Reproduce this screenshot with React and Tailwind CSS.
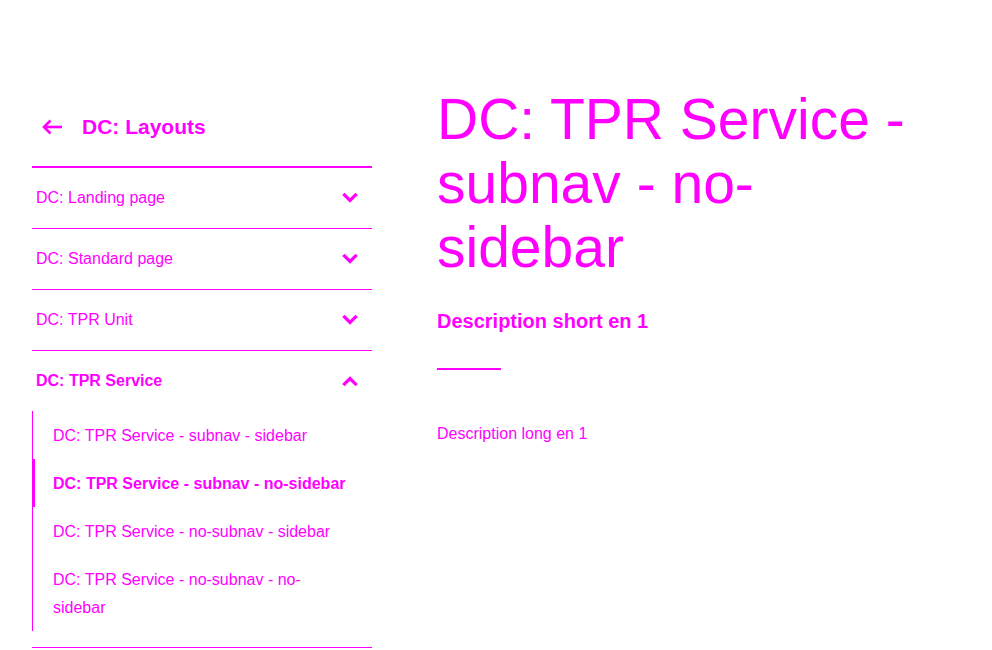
import { useState } from 'react';

const groups = [
    { title: 'DC: Landing page' },
    { title: 'DC: Standard page' },
    { title: 'DC: TPR Unit' },
    {
        title: 'DC: TPR Service',
        open: true,
        children: [
            { title: 'DC: TPR Service - subnav - sidebar' },
            { title: 'DC: TPR Service - subnav - no-sidebar', active: true },
            { title: 'DC: TPR Service - no-subnav - sidebar' },
            { title: 'DC: TPR Service - no-subnav - no-sidebar' },
        ],
    },
];

function Chevron({ up }) {
    return (
        <svg width="16" height="10" viewBox="0 0 16 10" fill="none" stroke="currentColor" strokeWidth={3.2} strokeLinecap="square">
            {up ? <polyline points="2.5,8 8,2.5 13.5,8" /> : <polyline points="2.5,2 8,7.5 13.5,2" />}
        </svg>
    );
}

export default function App() {
    const [openIndex, setOpenIndex] = useState(3);

    return (
        <div className="min-h-[650px] bg-white text-[#ff00ff]" style={{ fontFamily: '"Liberation Sans", Arial, sans-serif' }}>
            <div className="flex pl-8 pt-[87px]">
                <aside className="w-[340px] shrink-0">
                    <div className="flex h-[81px] items-center border-b-2 border-[#ff00ff] pl-[10px]">
                        <svg width="22" height="16" viewBox="0 0 22 16" fill="none" stroke="currentColor" strokeWidth={2.6}>
                            <line x1="2" y1="8" x2="20" y2="8" />
                            <polyline points="8.5,1.5 2,8 8.5,14.5" />
                        </svg>
                        <span className="ml-[18px] text-[21px] font-bold">DC: Layouts</span>
                    </div>
                    {groups.map((group, i) => {
                        const open = openIndex === i;
                        return (
                            <div key={group.title} className="border-b border-[#ff00ff]">
                                <button
                                    onClick={() => setOpenIndex(open ? null : i)}
                                    className="flex h-[60px] w-full items-center justify-between pl-1 pr-[14px] text-left"
                                >
                                    <span className={`text-[16px] ${open ? 'font-bold' : ''}`}>{group.title}</span>
                                    <Chevron up={open} />
                                </button>
                                {open && group.children && (
                                    <ul className="mb-[16px] border-l border-[#ff00ff]">
                                        {group.children.map((child) => (
                                            <li
                                                key={child.title}
                                                className={`pt-[11px] pb-[9px] pl-5 pr-[22px] text-[16px] leading-[28px] ${
                                                    child.active ? '-ml-px border-l-[3px] border-[#ff00ff] pl-[18px] font-bold' : ''
                                                }`}
                                            >
                                                {child.title}
                                            </li>
                                        ))}
                                    </ul>
                                )}
                            </div>
                        );
                    })}
                </aside>

                <main className="ml-[65px] w-[490px]">
                    <h1 className="text-[57px] leading-[64px]">DC: TPR Service - subnav - no-sidebar</h1>
                    <p className="mt-[28px] text-[20px] font-bold leading-[28px]">Description short en 1</p>
                    <div className="mt-[33px] h-[2px] w-16 bg-[#ff00ff]" />
                    <p className="mt-[52px] text-[16px] leading-[24px]">Description long en 1</p>
                </main>
            </div>
        </div>
    );
}
